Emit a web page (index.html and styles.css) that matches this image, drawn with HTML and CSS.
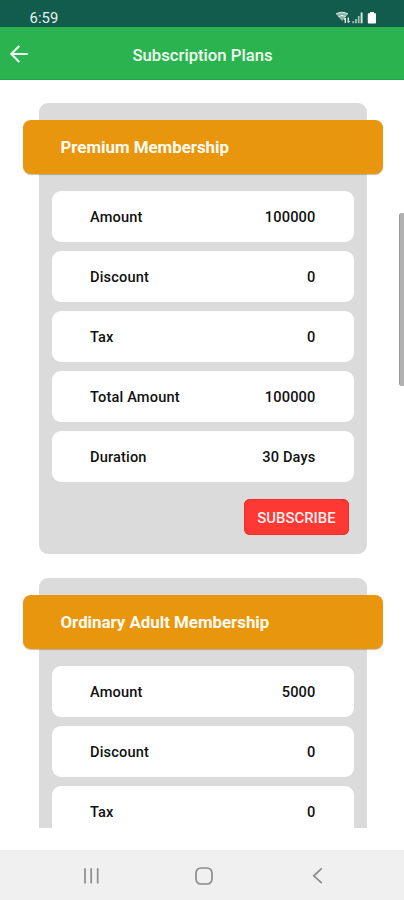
FILE: index.html
```
<!DOCTYPE html>
<html lang="en">
<head>
<meta charset="utf-8">
<title>Subscription Plans</title>
<link rel="stylesheet" href="styles.css">
</head>
<body>
<div class="status">
  <span class="clock">6:59</span>
  <svg class="indicators" width="42" height="14" viewBox="0 0 42 14">
    <path d="M0 3Q6-.5 12 3L6 10Z" fill="#8fb3aa"/>
    <path d="M0 3Q6-.5 12 3M2.5 5.5Q6 3.5 9.5 5.5" fill="none" stroke="#e8f1ee" stroke-width="1"/>
    <path d="M9.3 12V7M8 8.5L9.3 7M12.2 6.5V11.5M12.2 11.5L13.5 10" fill="none" stroke="#e8f1ee" stroke-width="1.3"/>
    <path d="M17.3 12.3V10M20 12.3V8M22.7 12.3V5" stroke="#9fbeb6" stroke-width="1.8"/>
    <path d="M25.6 12.3V1.5" stroke="#d5e3df" stroke-width="2"/>
    <path d="M34 1h4v1.2h1.2q.8 0 .8.8v8.8q0 .8-.8.8h-6.6q-.8 0-.8-.8V3q0-.8.8-.8h1.4z" fill="#fff"/>
  </svg>
</div>
<header class="appbar">
  <svg class="back" width="20" height="20" viewBox="0 0 20 20"><path d="M18.7 10H2.5M10.3 2L2.3 10L10.3 18" fill="none" stroke="#f2fff4" stroke-width="2.1"/></svg>
  <h1>Subscription Plans</h1>
</header>
<main class="plans">
  <section class="card">
    <h2>Premium Membership</h2>
    <dl>
      <div class="row"><dt>Amount</dt><dd>100000</dd></div>
      <div class="row"><dt>Discount</dt><dd>0</dd></div>
      <div class="row"><dt>Tax</dt><dd>0</dd></div>
      <div class="row"><dt>Total Amount</dt><dd>100000</dd></div>
      <div class="row"><dt>Duration</dt><dd>30 Days</dd></div>
    </dl>
    <button class="subscribe">SUBSCRIBE</button>
  </section>
  <section class="card">
    <h2>Ordinary Adult Membership</h2>
    <dl>
      <div class="row"><dt>Amount</dt><dd>5000</dd></div>
      <div class="row"><dt>Discount</dt><dd>0</dd></div>
      <div class="row"><dt>Tax</dt><dd>0</dd></div>
    </dl>
  </section>
  <div class="scrollbar"></div>
</main>
<nav class="navbar">
  <svg width="18" height="18" viewBox="0 0 18 18"><path d="M3 1.2V16.6M9.2 1.2V16.6M15.7 1.2V16.6" stroke="#8b8b8b" stroke-width="1.7"/></svg>
  <svg width="18" height="18" viewBox="0 0 18 18"><rect x="1" y="1" width="16" height="16" rx="5" fill="none" stroke="#8b8b8b" stroke-width="1.7"/></svg>
  <svg width="18" height="18" viewBox="0 0 18 18"><path d="M12.8 1.4L4.8 8.8L12.8 16.2" fill="none" stroke="#8b8b8b" stroke-width="1.7"/></svg>
</nav>
</body>
</html>
```
FILE: styles.css
```
* { box-sizing: border-box; }
body {
  margin: 0;
  width: 404px;
  height: 900px;
  overflow: hidden;
  display: flex;
  flex-direction: column;
  background: #fff;
  font-family: Roboto, sans-serif;
  color: #111;
}
h1, h2, dl, dt, dd { margin: 0; }
.status {
  height: 27px;
  flex: none;
  padding: 9px 26px 0 29.5px;
  display: flex;
  justify-content: space-between;
  background: #115c4d;
}
.clock { font-size: 14.8px; line-height: 18px; color: #e6f0ed; letter-spacing: 0.1px; }
.indicators { margin-top: 2px; }
.appbar {
  height: 53px;
  flex: none;
  display: grid;
  grid-template-columns: 20px 1fr 20px;
  align-items: center;
  padding: 2px 9px 0;
  background: #2bb350;
  border-bottom: 1px solid #22a548;
}
.appbar h1 {
  padding: 2px 0 0 1px;
  text-align: center;
  font-size: 16.7px;
  font-weight: 500;
  color: #f0fff2;
}
.plans {
  position: relative;
  height: 748px;
  flex: none;
  overflow: hidden;
  padding: 22.5px 37.5px 0 39px;
}
.card {
  height: 451.5px;
  margin-bottom: 23.5px;
  padding-top: 17.5px;
  display: flex;
  flex-direction: column;
  background: #dbdbdb;
  border-radius: 9px;
}
.card h2 {
  height: 54px;
  flex: none;
  margin: 0 -16px;
  padding-left: 37.5px;
  line-height: 55px;
  font-size: 16.85px;
  font-weight: 700;
  color: #fffaf0;
  background: #e8960e;
  border-radius: 8px;
  box-shadow: 0 1px 1px rgba(100, 70, 20, .35);
}
.card dl {
  margin: 17px 13px 0;
  display: flex;
  flex-direction: column;
  gap: 8.5px;
}
.row {
  height: 51.4px;
  padding: 1px 38px 0;
  display: flex;
  align-items: center;
  justify-content: space-between;
  background: #fff;
  border-radius: 9px;
  font-size: 14.6px;
  line-height: 18px;
  font-weight: 500;
  letter-spacing: 0.15px;
}
.subscribe {
  align-self: flex-end;
  width: 105px;
  height: 36px;
  margin: 17px 17.5px 0 0;
  padding: 2px 0 0;
  border: 0;
  border-radius: 6px;
  background: #fe3833;
  box-shadow: inset 0 0 0 1px #f52d28;
  color: #fff0ef;
  font: 500 14.9px Roboto, sans-serif;
}
.scrollbar {
  position: absolute;
  right: 0;
  top: 133px;
  width: 5px;
  height: 173px;
  background: #b1b1b1;
  border-left: 1px solid #999;
  border-radius: 3px 0 0 3px;
}
.navbar {
  margin-top: 22px;
  height: 50px;
  padding: 2px 77.5px 0 82px;
  display: flex;
  align-items: center;
  justify-content: space-between;
  background: #f0f0f0;
}
```
